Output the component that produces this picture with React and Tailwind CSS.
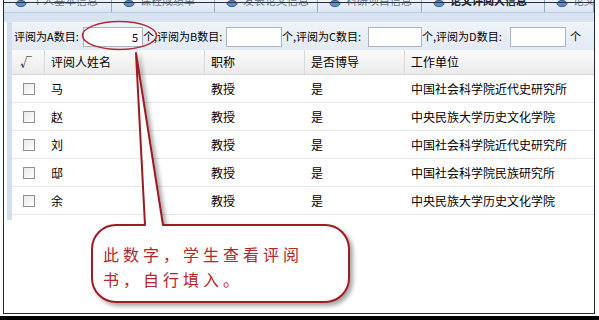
import React from "react";

const tabs = [
  { label: "个人基本信息", w: "w-[108px]" },
  { label: "课程成绩单", w: "w-[103px]" },
  { label: "发表论文信息", w: "w-[103px]" },
  { label: "科研项目信息", w: "w-[104px]" },
  { label: "论文评阅人信息", w: "w-[123px]", active: true },
  { label: "论文答辩信息", w: "flex-1" },
];

const reviewers = [
  { name: "马", title: "教授", tutor: "是", unit: "中国社会科学院近代史研究所" },
  { name: "赵", title: "教授", tutor: "是", unit: "中央民族大学历史文化学院" },
  { name: "刘", title: "教授", tutor: "是", unit: "中国社会科学院近代史研究所" },
  { name: "邸", title: "教授", tutor: "是", unit: "中国社会科学院民族研究所" },
  { name: "余", title: "教授", tutor: "是", unit: "中央民族大学历史文化学院" },
];

const TabIcon = () => (
  <svg width="12" height="8" viewBox="0 0 12 8" className="shrink-0">
    <ellipse cx="6" cy="3.5" rx="5" ry="3" fill="#5d8fd8" stroke="#2c4f8a" strokeWidth="1" />
  </svg>
);

const NumInput = ({ w, value = "" }) => (
  <input
    readOnly
    value={value}
    className={`${w} h-[20px] border border-[#a9b3c1] bg-white px-[4px] text-right text-[11px] text-black outline-none`}
  />
);

const Callout = () => (
  <svg className="absolute left-0 top-0 pointer-events-none" width="599" height="320" viewBox="0 0 599 320">
    <defs>
      <filter id="shadow" x="-10%" y="-10%" width="130%" height="130%">
        <feDropShadow dx="3" dy="3" stdDeviation="2" floodColor="#000" floodOpacity="0.35" />
      </filter>
    </defs>
    <ellipse cx="119.5" cy="35.5" rx="37" ry="14" fill="none" stroke="#b02a2f" strokeWidth="1.5" />
    <path
      d="M116 225 L145 225 L136 53 L163 225 L325 225 A24 24 0 0 1 349 249 L349 278 A24 24 0 0 1 325 302 L116 302 A24 24 0 0 1 92 278 L92 249 A24 24 0 0 1 116 225 Z"
      fill="#fff"
      stroke="#9b1c22"
      strokeWidth="2"
      strokeLinejoin="round"
      filter="url(#shadow)"
    />
  </svg>
);

export default function App() {
  return (
    <div className="relative w-[599px] h-[320px] overflow-hidden bg-white font-['Noto_Sans_CJK_SC',sans-serif] text-black">
      <div className="ml-[3px] w-[592px] h-[314px] border-l border-r border-b border-[#1f2a38] flex flex-col relative">
        {/* 标签页 */}
        <div className="h-[13px] flex overflow-hidden bg-gradient-to-b from-[#eef3fa] to-[#d9e4f2] border-b border-[#b9c9de]">
          {tabs.map((t) => (
            <div
              key={t.label}
              className={`${t.w} shrink-0 flex items-start border-r border-[#94a8c4] pl-[11px] gap-[5px] overflow-hidden`}
            >
              <div className="mt-[0px]">
                <TabIcon />
              </div>
              <span
                className={`-mt-[6px] text-[11px] leading-[12px] whitespace-nowrap ${
                  t.active ? "text-[#1c2430] font-bold" : "text-[#6a7a92]"
                }`}
              >
                {t.label}
              </span>
            </div>
          ))}
        </div>
        <div className="absolute left-0 right-0 top-[2px] h-px bg-[#27303c]" />
        <div className="h-[9px] bg-[#d8e3f1]" />

        {/* 评阅数目 + 列表 */}
        <div className="h-[198px] border-l-[5px] border-[#d3dfee] ml-[3px] flex flex-col">
          <div className="h-[28px] flex items-center pl-[2px] text-[11px] bg-gradient-to-b from-[#eef3f9] to-[#e3eaf4] border-t border-[#f7f9fc] whitespace-nowrap">
            <span className="w-[69px]">评阅为A数目:</span>
            <NumInput w="w-[60px]" value="5" />
            <span className="w-[14px]">个,</span>
            <span className="w-[69px]">评阅为B数目:</span>
            <NumInput w="w-[56px]" />
            <span className="w-[86px]">个,评阅为C数目:</span>
            <NumInput w="w-[54px]" />
            <span className="w-[88px]">个,评阅为D数目:</span>
            <NumInput w="w-[56px]" />
            <span className="ml-[4px]">个</span>
          </div>

          <div className="grid grid-cols-[32px_160px_100px_100px_1fr] h-[25px] items-center text-[12px] bg-gradient-to-b from-[#fafafa] to-[#ebebeb] border-b border-[#d5d5d5]">
            <div className="pl-[8px] h-full flex items-center">√</div>
            <div className="h-full flex items-center border-l border-[#d9d9d9] pl-[6px]">评阅人姓名</div>
            <div className="h-full flex items-center border-l border-[#d9d9d9] pl-[6px]">职称</div>
            <div className="h-full flex items-center border-l border-[#d9d9d9] pl-[6px]">是否博导</div>
            <div className="h-full flex items-center border-l border-[#d9d9d9] pl-[6px]">工作单位</div>
          </div>

          {reviewers.map((r, i) => (
            <div
              key={i}
              className="grid grid-cols-[32px_160px_100px_100px_1fr] h-[28px] items-center text-[12px] border-b border-[#e6e6e6]"
            >
              <div className="pl-[11px] flex items-center">
                <span className="w-[12px] h-[12px] border border-[#8f8f8f] bg-gradient-to-br from-[#e9e9e9] to-white" />
              </div>
              <div className="pl-[7px]">{r.name}</div>
              <div className="pl-[7px]">{r.title}</div>
              <div className="pl-[7px]">{r.tutor}</div>
              <div className="pl-[7px]">{r.unit}</div>
            </div>
          ))}
        </div>
      </div>
      <div className="h-[2px] bg-white" />
      <div className="h-[4px] bg-black" />

      <Callout />
      <div className="absolute left-[103px] top-[242px] text-[16px] leading-[25px] tracking-[4px] text-[#b3262c]">
        <div>此数字，学生查看评阅</div>
        <div>书，自行填入。</div>
      </div>
    </div>
  );
}
